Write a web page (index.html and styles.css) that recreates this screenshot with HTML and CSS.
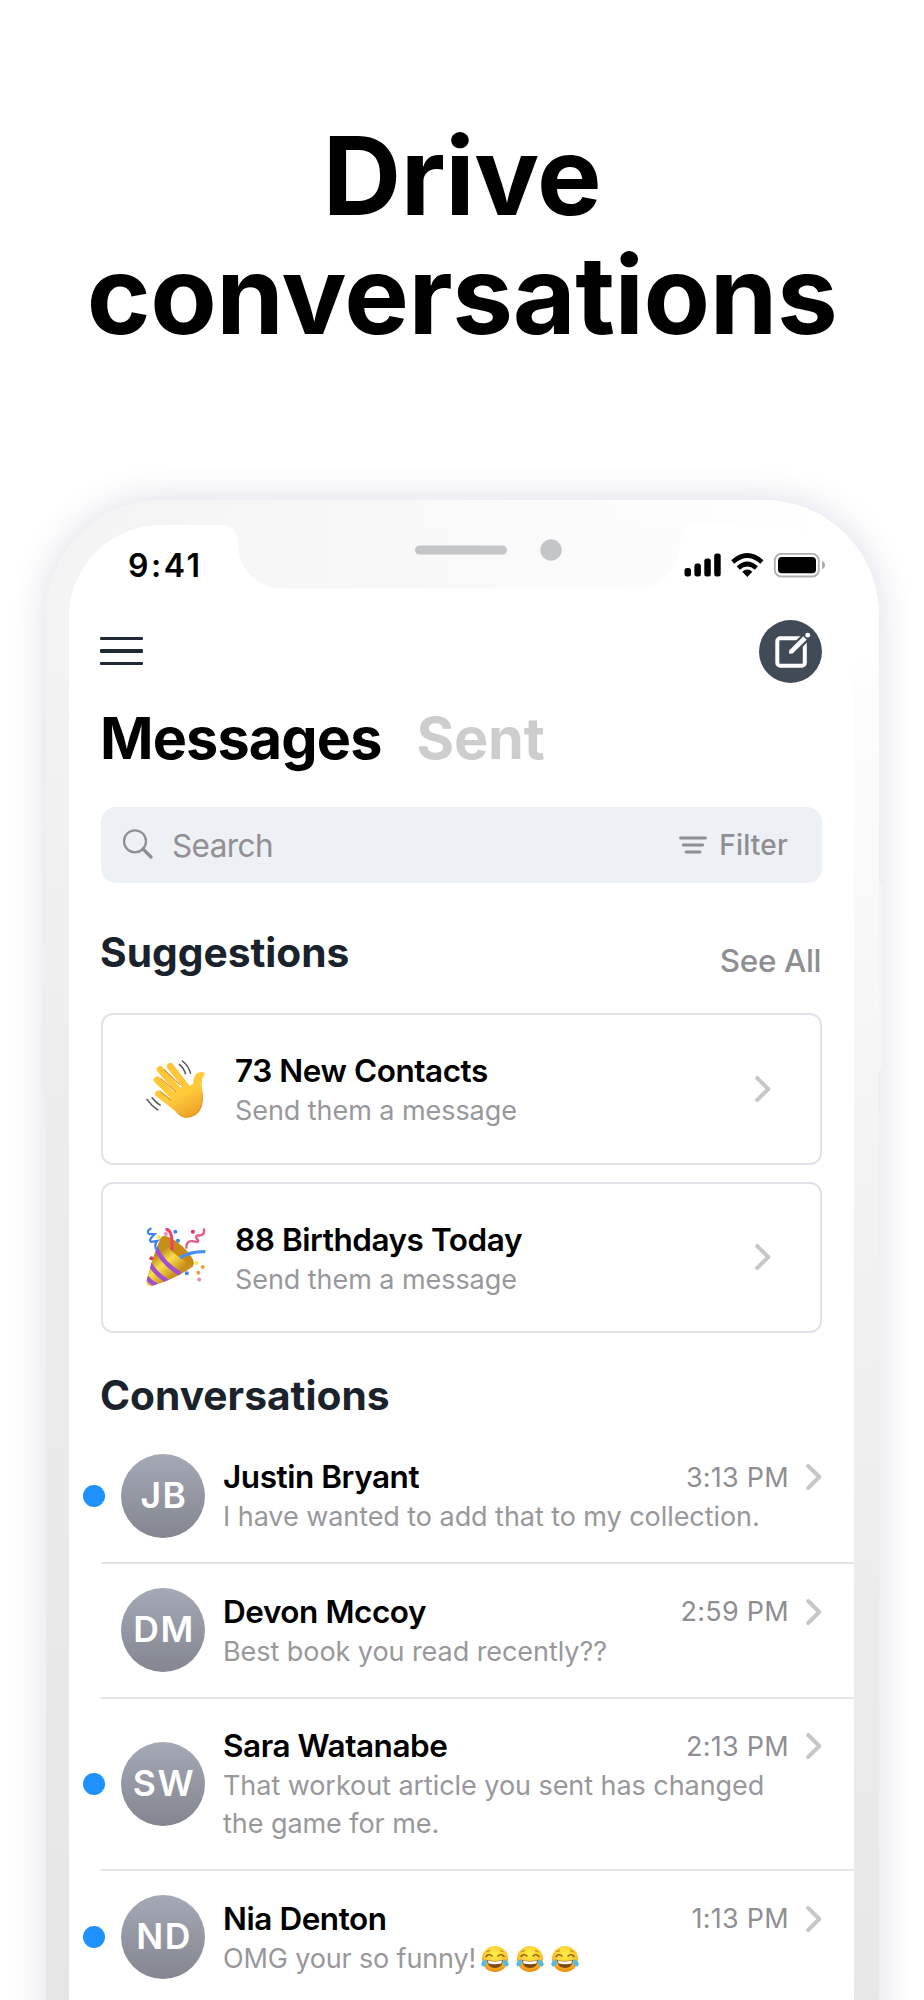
FILE: index.html
```html
<!DOCTYPE html>
<html lang="en">

<head>
	<meta charset="utf-8">
	<title>Drive conversations</title>
	<link rel="stylesheet" href="styles.css">
</head>

<body>
	<!-- shared icons -->
	<svg class="sprites" width="0" height="0">
		<symbol id="chevron" viewBox="0 0 16 28">
			<path d="M2.2 3 L13.300 14 L2.200 25" fill="none" stroke="#c7c7ca" stroke-width="4" stroke-linecap="round" stroke-linejoin="round" />
		</symbol>
		<radialGradient id="face" cx="50%" cy="30%" r="70%">
			<stop offset="0" stop-color="#fff04a" />
			<stop offset="0.6" stop-color="#fdc72c" />
			<stop offset="1" stop-color="#e88a10" />
		</radialGradient>
		<symbol id="joy" viewBox="0 0 28 28">
			<circle cx="14" cy="14" r="13" fill="url(#face)" />
			<path d="M5 11.5 Q8 8 11 11 M17 11 Q20 8 23 11.5" fill="none" stroke="#8a5413" stroke-width="1.4" stroke-linecap="round" />
			<path d="M5.5 6.8 L9 5.4 M19 5.4 L22.5 6.8" stroke="#b9791a" stroke-width="1" />
			<path d="M6 15 Q14 17 22 15 Q21.500 23 14 23 Q6.500 23 6 15Z" fill="#7d4a12" />
			<path d="M7 15.600 Q14 17.600 21 15.600 L20.500 18.500 Q14 20 7.500 18.500Z" fill="#fff" />
			<path d="M5.500 14 Q6.500 21 2.500 21.500 Q-0.500 21 0.500 18 Q1.500 15.500 5.500 14Z M22.500 14 Q21.500 21 25.500 21.500 Q28.500 21 27.500 18 Q26.500 15.500 22.500 14Z" fill="#4fb9f0" />
		</symbol>
	</svg>

	<div class="page">
		<h1>Drive<br>conversations</h1>

		<div class="phone">
			<div class="sideButton silent"></div>
			<div class="sideButton volUp"></div>
			<div class="sideButton volDown"></div>
			<div class="sideButton power"></div>

			<div class="screen">
				<svg class="notch" width="470" height="64" viewBox="0 0 470 64">
					<defs>
						<linearGradient id="notchFill" x1="0" x2="1" y1="0" y2="0">
							<stop offset="0" stop-color="#f6f6f6" />
							<stop offset="1" stop-color="#fcfcfc" />
						</linearGradient>
					</defs>
					<path d="M0 -1 V0 Q13 1 14 18 Q14 42 32 55 Q43 63.500 58 63.500 H412 Q427 63.500 438 55 Q456 42 456 18 Q457 1 470 0 V-1Z" fill="url(#notchFill)" />
					<rect x="191" y="20.500" width="92" height="9" rx="4.500" fill="#c4c5c8" />
					<circle cx="327" cy="25" r="10.700" fill="#c4c5c8" />
				</svg>

				<div class="statusBar">
					<span class="clock">9:41</span>
					<svg width="142" height="26" viewBox="684 552 142 26">
						<rect x="684.500" y="568" width="6.500" height="8.500" rx="2.500" />
						<rect x="694.400" y="563.500" width="6.500" height="13" rx="2.500" />
						<rect x="704.300" y="558.500" width="6.500" height="18" rx="2.500" />
						<rect x="714.200" y="553.500" width="6.500" height="23" rx="2.500" />
						<g fill="none" stroke="#000" stroke-width="4.600">
							<path d="M732.700 562 Q747.300 549 761.900 562" />
							<path d="M738.200 568 Q747.300 560 756.400 568" />
						</g>
						<path d="M742.200 571.800 Q747.300 567.400 752.400 571.800 L747.300 577Z" />
						<rect x="774.800" y="553.900" width="44" height="22.600" rx="6.500" fill="none" stroke="#aeaeae" stroke-width="1.800" />
						<rect x="778" y="557" width="38" height="16.300" rx="3.800" />
						<path d="M822 561 Q825 562 825 565 Q825 568 822 569Z" fill="#aeaeae" />
					</svg>
				</div>

				<div class="nav">
					<div class="menu"><i></i><i></i><i></i></div>
					<div class="compose">
						<svg width="63" height="63" viewBox="0 0 63 63">
							<rect x="18.300" y="18.300" width="27.500" height="27.500" rx="3" fill="none" stroke="#fff" stroke-width="4" />
							<path d="M34 30 L52 12" stroke="#414b57" stroke-width="9" />
							<path d="M32.500 31.300 L46 18" stroke="#fff" stroke-width="4.600" />
							<path d="M30.500 33.300 L31 29.800 L34 32.800Z" fill="#fff" stroke="#fff" stroke-width="1" stroke-linejoin="round" />
							<circle cx="48.700" cy="15.200" r="2.400" fill="#fff" />
						</svg>
					</div>
				</div>

				<div class="tabs">
					<span class="active">Messages</span>
					<span class="sent">Sent</span>
				</div>

				<div class="search">
					<svg width="32" height="32" viewBox="0 0 32 32" fill="none" stroke="#928f94">
						<circle cx="13" cy="12.300" r="11" stroke-width="2.300" />
						<path d="M21 20 L29 28" stroke-width="3.400" stroke-linecap="round" />
					</svg>
					<span class="placeholder">Search</span>
					<svg class="filterIcon" width="28" height="20" viewBox="0 0 28 20" stroke="#8e8e93" stroke-width="2.900" stroke-linecap="round">
						<path d="M1.500 3 H26.500 M4.300 10 H23.700 M7 17 H21" />
					</svg>
					<span class="filter">Filter</span>
				</div>

				<div class="sectionHead">
					<h2 class="suggestionsTitle">Suggestions</h2>
					<span class="seeAll">See All</span>
				</div>

				<div class="card">
					<svg class="emoji" width="60" height="60" viewBox="50 56 178 178">
						<defs>
							<linearGradient id="skin" gradientUnits="userSpaceOnUse" x1="110" y1="80" x2="190" y2="230">
								<stop offset="0" stop-color="#fbc433" />
								<stop offset="0.550" stop-color="#ffcb3b" />
								<stop offset="1" stop-color="#ea9d28" />
							</linearGradient>
						</defs>
						<g stroke="url(#skin)" stroke-width="20" stroke-linecap="round" fill="none">
							<path d="M87 159 L140 200" />
							<path d="M83 118 L140 175" />
							<path d="M92 87 L155 160" />
							<path d="M122 78 L172 142" />
						</g>
						<path d="M125 160 L168 130 Q182 139 190 129 Q190 103 206 96 Q224 92 224 103 Q213 113 216 140 Q222 172 215 199 Q203 230 168 231 Q148 228 133 206 L118 192Z" fill="url(#skin)" />
						<g stroke="#d9902a" stroke-width="3" stroke-linecap="round" fill="none">
							<path d="M93 153 L124 178 M94 114 L137 152 M105 88 L150 132" />
							<path d="M217 160 Q222 204 193 222 Q168 235 147 220" stroke-width="2" />
						</g>
						<g stroke="#55565a" stroke-width="4.500" stroke-linecap="round" fill="none">
							<path d="M149 72 Q163 84 167 100 M158 62 Q176 76 182 98" />
							<path d="M53 176 Q65 194 85 207 M68 171 Q79 185 92 193" />
						</g>
					</svg>
					<div class="cardText">
						<div class="name contacts">73 New Contacts</div>
						<div class="message">Send them a message</div>
					</div>
					<svg width="16" height="28"><use href="#chevron" /></svg>
				</div>
				<div class="card">
					<svg class="emoji" width="60" height="60" viewBox="50 562 178 178">
						<defs>
							<linearGradient id="cone" gradientUnits="userSpaceOnUse" x1="75" y1="650" x2="125" y2="710">
								<stop offset="0" stop-color="#c08f17" />
								<stop offset="0.450" stop-color="#fae04a" />
								<stop offset="1" stop-color="#c98f1e" />
							</linearGradient>
							<clipPath id="coneShape">
								<path d="M94 594 Q120 640 191 678 Q135 718 66 737 Q51 737 51 724 Q69 651 94 594Z" />
							</clipPath>
						</defs>
						<ellipse cx="143" cy="634" rx="63" ry="21" transform="rotate(42 143 634)" fill="#c98a12" />
						<path d="M94 594 Q120 640 191 678 Q135 718 66 737 Q51 737 51 724 Q69 651 94 594Z" fill="url(#cone)" />
						<g clip-path="url(#coneShape)" fill="none" stroke="#a04fd0" stroke-width="13">
							<path d="M78 622 Q100 672 152 701 M60 667 Q75 700 115 724 M45 702 Q58 724 82 735" />
						</g>
						<path d="M108 570 Q130 566 127 631" fill="none" stroke="#ef3f6d" stroke-width="9" />
						<path d="M151 653 Q182 634 226 635" fill="none" stroke="#4a8ff2" stroke-width="10" />
						<path d="M66 566 Q48 575 60 583 L76 583 Q54 604 66 606 L84 603 Q72 616 82 630" fill="none" stroke="#3e82ef" stroke-width="6.500" />
						<path d="M222 566 Q226 590 203 587 Q193 591 204 600 Q209 610 188 604 Q168 602 170 626" fill="none" stroke="#ea5b85" stroke-width="7" />
						<g fill="#4287ef"><circle cx="137" cy="576" r="6" /><circle cx="145" cy="603" r="6" /><circle cx="171" cy="699" r="6" /></g>
						<g fill="#ef88bb"><circle cx="109" cy="583" r="6" /><circle cx="208" cy="718" r="6" /></g>
						<g fill="#f7ea4e"><circle cx="88" cy="592" r="6" /><circle cx="200" cy="669" r="6" /></g>
						<g fill="#f1a044"><circle cx="218" cy="681" r="6" /><circle cx="205" cy="698" r="6" /></g>
						<g fill="#d6365f"><circle cx="66" cy="655" r="6" /><circle cx="189" cy="576" r="6" /></g>
					</svg>
					<div class="cardText">
						<div class="name birthdays">88 Birthdays Today</div>
						<div class="message">Send them a message</div>
					</div>
					<svg width="16" height="28"><use href="#chevron" /></svg>
				</div>

				<h2 class="conversationsTitle">Conversations</h2>

				<div class="row">
					<div class="dot unread"></div>
					<div class="avatar">JB</div>
					<div class="rowText">
						<div class="rowTop">
							<span class="name">Justin Bryant</span>
							<span class="time">3:13 PM</span>
							<svg width="16" height="28"><use href="#chevron" /></svg>
						</div>
						<div class="message">I have wanted to add that to my collection.</div>
					</div>
				</div>
				<div class="row">
					<div class="dot"></div>
					<div class="avatar">DM</div>
					<div class="rowText">
						<div class="rowTop">
							<span class="name">Devon Mccoy</span>
							<span class="time">2:59 PM</span>
							<svg width="16" height="28"><use href="#chevron" /></svg>
						</div>
						<div class="message">Best book you read recently??</div>
					</div>
				</div>
				<div class="row tall">
					<div class="dot unread"></div>
					<div class="avatar">SW</div>
					<div class="rowText">
						<div class="rowTop">
							<span class="name">Sara Watanabe</span>
							<span class="time">2:13 PM</span>
							<svg width="16" height="28"><use href="#chevron" /></svg>
						</div>
						<div class="message">That workout article you sent has changed<br>the game for me.</div>
					</div>
				</div>
				<div class="row">
					<div class="dot unread"></div>
					<div class="avatar">ND</div>
					<div class="rowText">
						<div class="rowTop">
							<span class="name">Nia Denton</span>
							<span class="time">1:13 PM</span>
							<svg width="16" height="28"><use href="#chevron" /></svg>
						</div>
						<div class="message withEmoji">
							<span class="joke">OMG your so funny!</span>
							<svg width="28" height="28"><use href="#joy" /></svg>
							<svg width="28" height="28"><use href="#joy" /></svg>
							<svg width="28" height="28"><use href="#joy" /></svg>
						</div>
					</div>
				</div>
			</div>
		</div>
	</div>
</body>

</html>
```
FILE: styles.css
```css
* {
	box-sizing: border-box;
}

body {
	margin: 0;
	background-color: #fff;
	font-family: Inter, "Liberation Sans", sans-serif;
	color: #000;
}

.sprites {
	position: absolute;
}

.page {
	width: 924px;
	height: 2000px;
	padding-top: 116px;
	overflow: hidden;
}

h1 {
	margin: 0 0 146px;
	font-size: 108.6px;
	line-height: 119px;
	font-weight: 700;
	letter-spacing: -0.45px;
	text-align: center;
}

h2 {
	margin: 0;
	font-size: 40.7px;
	line-height: 48px;
	font-weight: 700;
	color: #1a222c;
}

.phone {
	position: relative;
	width: 833px;
	height: 1700px;
	margin-left: 46px;
	padding: 25px 25px 0 23px;
	border-radius: 115px 115px 0 0;
	background: linear-gradient(100deg, #f3f3f3 0, #fff 90%) 0 0 / 100% 160px no-repeat, linear-gradient(#f3f3f3, #ececec 500px, #e3e3e3) 0 160px / 50% 100% no-repeat, linear-gradient(#fefefe, #f4f4f4 450px, #ececec 950px, #e3e3e3) 100% 160px / 50% 100% no-repeat;
	box-shadow: 0 0 34px rgba(70, 70, 130, 0.19);
}

.screen {
	position: relative;
	height: 1600px;
	border-radius: 92px 92px 0 0;
	background-color: #fff;
}

/* buttons on the edges of the phone */
.sideButton {
	position: absolute;
	left: -4px;
	width: 4px;
	border-radius: 4px 0 0 4px;
	background-color: #ededed;
}

.silent {
	top: 217px;
	height: 65px;
}

.volUp {
	top: 333px;
	height: 113px;
}

.volDown {
	top: 484px;
	height: 112px;
}

.power {
	left: auto;
	right: -4px;
	top: 383px;
	height: 187px;
	border-radius: 0 4px 4px 0;
	background-color: #f4f4f4;
}

.notch {
	position: absolute;
	top: 0;
	left: 155px;
}

.statusBar {
	display: flex;
	align-items: center;
	justify-content: space-between;
	height: 80px;
	padding: 0 28px 0 59px;
}

.clock {
	font-size: 32px;
	font-weight: 600;
	letter-spacing: 2.5px;
}

.nav {
	display: flex;
	align-items: center;
	justify-content: space-between;
	height: 92px;
	padding: 0 32px 0 31px;
}

.menu {
	display: flex;
	flex-direction: column;
	gap: 9px;
	width: 43px;
}

.menu i {
	height: 3.6px;
	border-radius: 1px;
	background-color: #1f2a35;
}

.compose {
	width: 63px;
	height: 63px;
	border-radius: 50%;
	background-color: #414b57;
}

.tabs {
	display: flex;
	align-items: center;
	gap: 35px;
	height: 82px;
	padding-left: 31px;
	font-size: 57.5px;
	font-weight: 700;
}

.active {
	letter-spacing: -0.85px;
}

.sent {
	letter-spacing: -0.2px;
	color: #cdcdcd;
}

.search {
	display: flex;
	align-items: center;
	height: 76px;
	margin: 28px 32px 0 32px;
	padding: 0 34px 0 21px;
	border-radius: 15px;
	background-color: #edf1f5;
}

.placeholder {
	flex: 1;
	margin-left: 18px;
	font-size: 31.5px;
	letter-spacing: -0.6px;
	color: #928f94;
}

.filterIcon {
	margin-right: 12px;
}

.filter {
	font-size: 28px;
	font-weight: 500;
	letter-spacing: 0.2px;
	color: #8e8e93;
}

.sectionHead {
	display: flex;
	align-items: center;
	justify-content: space-between;
	height: 130px;
	margin: 0 33px 0 31px;
	padding-top: 9px;
}

.seeAll {
	padding-top: 16px;
	font-size: 31.5px;
	font-weight: 500;
	letter-spacing: -0.4px;
	color: #8e8e93;
}

.card {
	display: flex;
	align-items: center;
	height: 151.5px;
	margin: 0 32px 17px 32px;
	padding: 0 49px 0 43px;
	border: 2px solid #dfe3e8;
	border-radius: 12px;
}

.emoji {
	margin-right: 29px;
}

.cardText {
	flex: 1;
	padding-top: 3px;
}

.name {
	font-size: 31.5px;
	line-height: 42px;
	font-weight: 600;
	letter-spacing: -0.45px;
}

.message {
	font-size: 27px;
	line-height: 38px;
	letter-spacing: -0.06px;
	color: #98989c;
	white-space: nowrap;
}

.conversationsTitle {
	height: 96.5px;
	margin: -17px 0 0 31px;
	padding-top: 38.5px;
}

.row {
	display: flex;
	align-items: center;
	height: 134.5px;
	margin-left: 32px;
	padding-right: 32px;
	border-bottom: 2px solid #e5e5e7;
}

.tall {
	height: 172.5px;
}

.dot {
	width: 22px;
	height: 22px;
	margin: 0 16px 0 -18px;
	border-radius: 50%;
}

.unread {
	background-color: #1e90ff;
}

.avatar {
	width: 84px;
	height: 84px;
	margin-right: 18px;
	padding-left: 2px;
	border-radius: 50%;
	background: linear-gradient(#a5a9b6, #838690);
	color: #fff;
	font-size: 35.5px;
	line-height: 84px;
	font-weight: 600;
	letter-spacing: 1.5px;
	text-align: center;
}

.rowText {
	flex: 1;
	padding-top: 1px;
}

.rowTop {
	display: flex;
	align-items: center;
	height: 42px;
}

.rowTop .name {
	flex: 1;
}

.time {
	margin-right: 17px;
	font-size: 27px;
	letter-spacing: 0.25px;
	color: #8e8e93;
}

.withEmoji {
	display: flex;
	align-items: center;
	gap: 7px;
}

.joke {
	margin-right: -2px;
	letter-spacing: -0.15px;
}
```
